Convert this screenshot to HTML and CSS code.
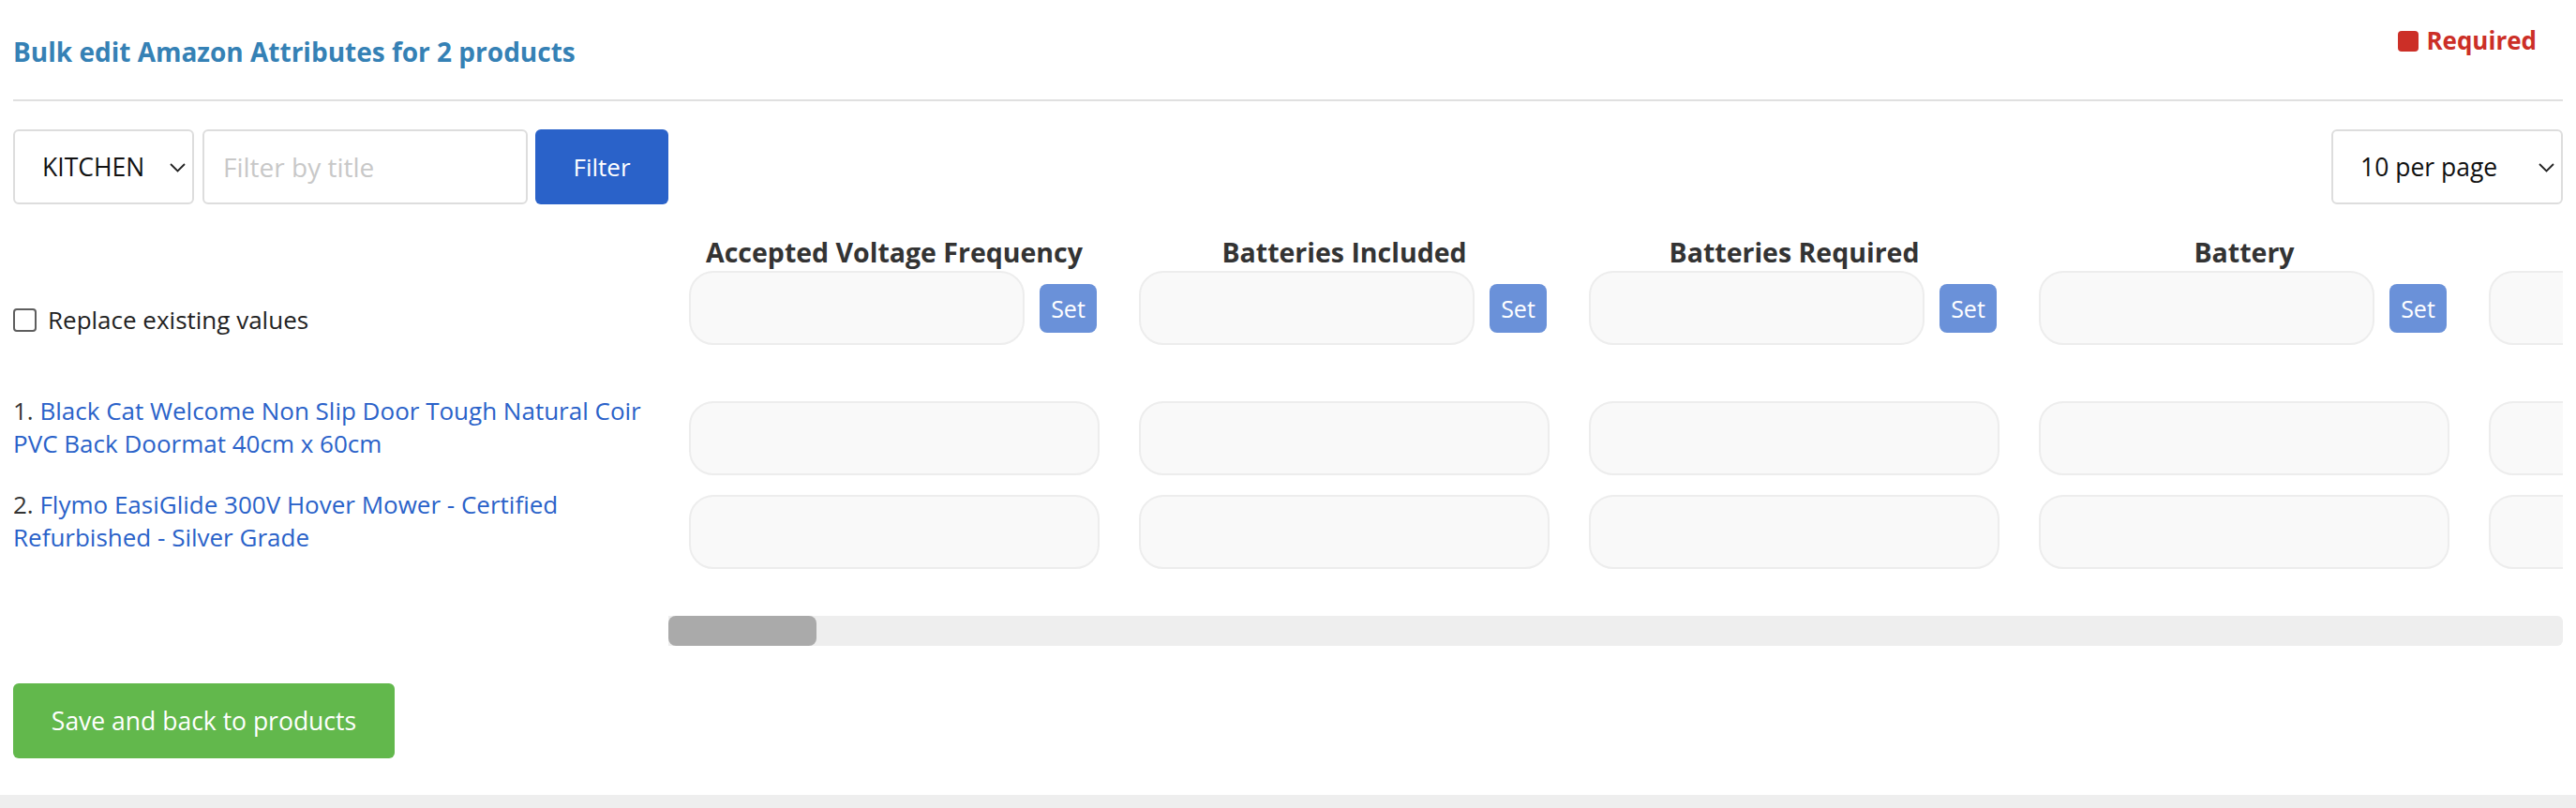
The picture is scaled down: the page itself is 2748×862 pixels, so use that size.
FILE: index.html
```html
<!DOCTYPE html>
<html lang="en">
<head>
	<meta charset="UTF-8">
	<title>Bulk edit Amazon Attributes</title>
	<link rel="stylesheet" href="styles.css">
</head>
<body>
	<div class="card">
		<div class="head">
			<h1 class="title">Bulk edit Amazon Attributes for 2 products</h1>
			<span class="legend"><span class="swatch"></span>Required</span>
		</div>

		<div class="toolbar">
			<div class="filters">
				<span class="pick pick-cat">
					<select class="select">
						<option>KITCHEN</option>
						<option>GARDEN</option>
					</select>
					<svg class="chev" width="17" height="10" viewBox="0 0 17 10"><polyline points="1,1 8.5,8.5 16,1" fill="none" stroke="#222" stroke-width="1.8"/></svg>
				</span>
				<input class="search" type="text" placeholder="Filter by title">
				<button class="btn btn-blue">Filter</button>
			</div>
			<span class="pick pick-page">
				<select class="select">
					<option>10 per page</option>
					<option>25 per page</option>
					<option>50 per page</option>
				</select>
				<svg class="chev" width="17" height="10" viewBox="0 0 17 10"><polyline points="1,1 8.5,8.5 16,1" fill="none" stroke="#222" stroke-width="1.8"/></svg>
			</span>
		</div>

		<div class="sheet">
			<div class="row row-head">
				<div class="lead"></div>
				<div class="track">
					<div class="cell colname">Accepted Voltage Frequency</div>
					<div class="cell colname">Batteries Included</div>
					<div class="cell colname">Batteries Required</div>
					<div class="cell colname">Battery</div>
					<div class="cell colname"></div>
				</div>
			</div>

			<div class="row row-set">
				<div class="lead">
					<label class="replace"><input type="checkbox" class="tick"> Replace existing values</label>
				</div>
				<div class="track">
					<div class="cell setcell"><input class="field field-set" type="text"><button class="btn btn-set">Set</button></div>
					<div class="cell setcell"><input class="field field-set" type="text"><button class="btn btn-set">Set</button></div>
					<div class="cell setcell"><input class="field field-set" type="text"><button class="btn btn-set">Set</button></div>
					<div class="cell setcell"><input class="field field-set" type="text"><button class="btn btn-set">Set</button></div>
					<div class="cell setcell"><input class="field field-set" type="text"></div>
				</div>
			</div>

			<div class="row row-item">
				<div class="lead">
					<p class="product">1. <a href="javascript:;">Black Cat Welcome Non Slip Door Tough Natural Coir PVC Back Doormat 40cm x 60cm</a></p>
				</div>
				<div class="track">
					<div class="cell"><input class="field" type="text"></div>
					<div class="cell"><input class="field" type="text"></div>
					<div class="cell"><input class="field" type="text"></div>
					<div class="cell"><input class="field" type="text"></div>
					<div class="cell"><input class="field" type="text"></div>
				</div>
			</div>

			<div class="row row-item">
				<div class="lead">
					<p class="product">2. <a href="javascript:;">Flymo EasiGlide 300V Hover Mower - Certified Refurbished - Silver Grade</a></p>
				</div>
				<div class="track">
					<div class="cell"><input class="field" type="text"></div>
					<div class="cell"><input class="field" type="text"></div>
					<div class="cell"><input class="field" type="text"></div>
					<div class="cell"><input class="field" type="text"></div>
					<div class="cell"><input class="field" type="text"></div>
				</div>
			</div>

			<div class="row row-bar">
				<div class="lead"></div>
				<div class="scrollbar"><div class="thumb"></div></div>
			</div>
		</div>

		<button class="btn btn-green">Save and back to products</button>
	</div>
</body>
</html>
```

FILE: styles.css
```css
* {box-sizing: border-box;}
body {margin: 0;background: #eee;font-family: "Open Sans", "Liberation Sans", sans-serif;font-size: 26px;color: #333;}
a {color: #2a62c9;text-decoration: none;}
input, select, button {font-family: inherit;font-size: 26px;outline: none;}

.card {background: #fff;padding: 0 14px 39px;box-shadow: 0 2px 8px rgba(0,0,0,.14);}

/* heading + legend */
.head {display: flex;justify-content: space-between;align-items: flex-start;height: 108px;border-bottom: 2px solid #e0e0e0;}
.title {margin: 36px 0 0;font-size: 28px;line-height: 38px;font-weight: bold;color: #3581b5;}
.legend {display: inline-flex;align-items: center;margin: 26px 28px 0 0;line-height: 35px;font-weight: bold;color: #cc2f27;}
.swatch {width: 22px;height: 22px;margin-right: 8px;border-radius: 4px;background: #cc2f27;}

/* filter bar */
.toolbar {display: flex;justify-content: space-between;margin-top: 30px;height: 80px;}
.filters {display: flex;gap: 8px;}
.pick {position: relative;display: block;}
.pick-cat {width: 193px;margin-right: 1px;}
.pick-page {width: 247px;}
.select {appearance: none;-webkit-appearance: none;width: 100%;height: 80px;padding: 0 40px 0 29px;border: 2px solid #ddd;border-radius: 6px;background: #fff;color: #111;font-size: 26.5px;}
.chev {position: absolute;right: 9px;top: 36px;pointer-events: none;}
.search {width: 347px;height: 80px;padding: 0 20px;border: 2px solid #ddd;border-radius: 6px;color: #333;font-size: 28px;}
.search::placeholder {color: #c8c8c8;}

.btn {border: none;color: #fff;cursor: pointer;padding: 0;}
.btn-blue {width: 142px;height: 80px;border-radius: 6px;background: #2a62c9;}

/* attribute sheet */
.sheet {margin-top: 31px;}
.row {display: flex;}
.lead {flex: none;width: 699px;padding-right: 12px;}
.track {flex: 1;min-width: 0;display: flex;gap: 42px;padding-left: 22px;overflow: hidden;}
.cell {flex: none;width: 438px;}

.row-head {height: 40px;}
.colname {text-align: center;font-size: 28.5px;line-height: 40px;font-weight: bold;white-space: nowrap;color: #333;}

.row-set {height: 79px;}
.replace {display: flex;align-items: center;margin-top: 35px;line-height: 35px;color: #222;}
.tick {appearance: none;-webkit-appearance: none;width: 25px;height: 25px;margin: 0 12px 0 0;border: 2px solid #5e5e5e;border-radius: 4px;background: #fff;}
.setcell {display: flex;align-items: center;gap: 16px;}

.field {display: block;width: 100%;height: 79px;padding: 0 24px;border: 2px solid #ededed;border-radius: 26px;background: #f9f9f9;}
.field-set {width: 358px;}
.btn-set {width: 61px;height: 52px;border-radius: 8px;background: #6a91d9;font-size: 25px;}

.row-item {height: 79px;margin-top: 60px;}
.row-item + .row-item {margin-top: 21px;}
.product {margin: -7px 0 0;line-height: 35px;color: #333;}

.row-bar {margin-top: 50px;}
.scrollbar {flex: 1;height: 32px;border-radius: 0 6px 6px 0;background: #eee;}
.thumb {width: 158px;height: 32px;border-radius: 8px;background: #aaa;}

.btn-green {display: block;margin-top: 40px;width: 407px;height: 80px;border-radius: 6px;background: #62b84c;font-size: 26.5px;}
```
